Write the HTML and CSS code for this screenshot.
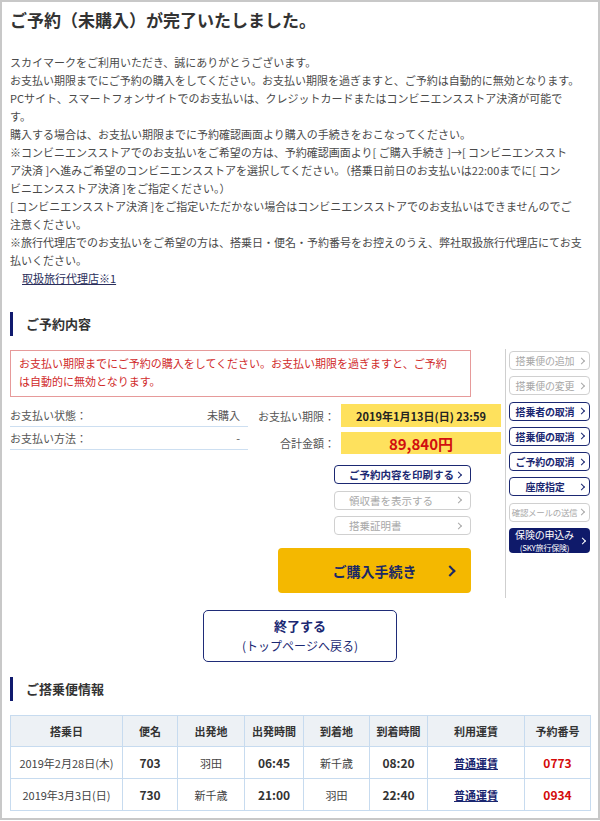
FILE: index.html
```html
<!DOCTYPE html>
<html lang="ja">
<head>
<meta charset="utf-8">
<title>ご予約完了</title>
<link rel="stylesheet" href="styles.css">
</head>
<body>
<div class="page">
  <h1 class="title">ご予約（未購入）が完了いたしました。</h1>
  <p class="notice">スカイマークをご利用いただき、誠にありがとうございます。<br>お支払い期限までにご予約の購入をしてください。お支払い期限を過ぎますと、ご予約は自動的に無効となります。<br>PCサイト、スマートフォンサイトでのお支払いは、クレジットカードまたはコンビニエンスストア決済が可能で<br>す。<br>購入する場合は、お支払い期限までに予約確認画面より購入の手続きをおこなってください。<br>※コンビニエンスストアでのお支払いをご希望の方は、予約確認画面より[ ご購入手続き ]→[ コンビニエンススト<br>ア決済 ]へ進みご希望のコンビニエンスストアを選択してください。（搭乗日前日のお支払いは22:00までに[ コン<br>ビニエンスストア決済 ]をご指定ください。）<br>[ コンビニエンスストア決済 ]をご指定いただかない場合はコンビニエンスストアでのお支払いはできませんのでご<br>注意ください。<br>※旅行代理店でのお支払いをご希望の方は、搭乗日・便名・予約番号をお控えのうえ、弊社取扱旅行代理店にてお支<br>払いください。</p>
  <p class="agent"><a href="#">取扱旅行代理店※1</a></p>

  <h2 class="sec">ご予約内容</h2>
  <div class="reserve">
    <div class="main">
      <div class="alert">お支払い期限までにご予約の購入をしてください。お支払い期限を過ぎますと、ご予約<br>は自動的に無効となります。</div>
      <div class="info">
        <div class="status">
          <div class="row"><span class="k">お支払い状態：</span><span class="v">未購入</span></div>
          <div class="row"><span class="k">お支払い方法：</span><span class="v">-</span></div>
        </div>
        <div class="pay">
          <span class="label">お支払い期限：</span><span class="hl date">2019年1月13日(日) 23:59</span>
          <span class="label">合計金額：</span><span class="hl price">89,840円</span>
        </div>
      </div>
      <div class="actions">
        <a href="#" class="btn wide navy">ご予約内容を印刷する</a>
        <a href="#" class="btn wide off">領収書を表示する</a>
        <a href="#" class="btn wide off">搭乗証明書</a>
        <a href="#" class="buy">ご購入手続き</a>
      </div>
    </div>
    <div class="side">
      <a href="#" class="btn sbtn off">搭乗便の追加</a>
      <a href="#" class="btn sbtn off">搭乗便の変更</a>
      <a href="#" class="btn sbtn navy">搭乗者の取消</a>
      <a href="#" class="btn sbtn navy">搭乗便の取消</a>
      <a href="#" class="btn sbtn navy">ご予約の取消</a>
      <a href="#" class="btn sbtn navy">座席指定</a>
      <a href="#" class="btn sbtn off small">確認メールの送信</a>
      <a href="#" class="btn sbtn fill"><span class="l1">保険の申込み</span><span class="l2">(SKY旅行保険)</span></a>
    </div>
  </div>

  <div class="finish">
    <a href="#" class="end"><span class="e1">終了する</span><span class="e2">(トップページへ戻る)</span></a>
  </div>

  <h2 class="sec sec2">ご搭乗便情報</h2>
  <table class="flights">
    <colgroup>
      <col style="width:112px"><col style="width:55px"><col style="width:67px"><col style="width:59px">
      <col style="width:66px"><col style="width:58px"><col style="width:97px"><col style="width:66px">
    </colgroup>
    <thead>
      <tr><th>搭乗日</th><th>便名</th><th>出発地</th><th>出発時間</th><th>到着地</th><th>到着時間</th><th>利用運賃</th><th>予約番号</th></tr>
    </thead>
    <tbody>
      <tr><td>2019年2月28日(木)</td><td class="num">703</td><td>羽田</td><td class="num">06:45</td><td>新千歳</td><td class="num">08:20</td><td><a href="#" class="fare">普通運賃</a></td><td class="rsv">0773</td></tr>
      <tr><td>2019年3月3日(日)</td><td class="num">730</td><td>新千歳</td><td class="num">21:00</td><td>羽田</td><td class="num">22:40</td><td><a href="#" class="fare">普通運賃</a></td><td class="rsv">0934</td></tr>
    </tbody>
  </table>
</div>
</body>
</html>
```

FILE: styles.css
```css
* { box-sizing: border-box; }
html, body { margin: 0; padding: 0; background: #fff; }
body {
  font-family: "Noto Sans CJK JP", "Noto Sans", sans-serif;
  color: #444;
  font-size: 11px;
}
a { text-decoration: none; }

.page {
  width: 600px;
  height: 820px;
  border: 2px solid #c8c8c8;
  padding: 7px 8px 0 8px;
  overflow: hidden;
}

.title {
  margin: 0;
  font-size: 17px;
  line-height: 22px;
  font-weight: bold;
  color: #333;
}

.notice {
  margin: 22px 0 0;
  font-size: 11px;
  line-height: 18px;
  color: #4a4a4a;
  white-space: nowrap;
}

.agent {
  margin: 0;
  padding-left: 12px;
  line-height: 18px;
}
.agent a {
  color: #2b2f5c;
  text-decoration: underline;
}

.sec {
  margin: 25px 0 0;
  height: 24px;
  line-height: 24px;
  border-left: 3px solid #101a6e;
  padding-left: 13px;
  font-size: 13px;
  font-weight: bold;
  color: #333;
}

.reserve {
  display: flex;
  margin-top: 13px;
}
.main {
  flex: 1;
  padding: 1px 0 5px;
  display: flex;
  flex-direction: column;
}
.alert {
  margin-right: 34px;
  border: 1px solid #e69a9a;
  padding: 3px 8px 6px;
  line-height: 18px;
  color: #d02a2a;
}

.info {
  display: flex;
  margin-top: 7px;
  margin-right: 4px;
}
.status {
  width: 238px;
}
.row {
  display: flex;
  justify-content: space-between;
  height: 23px;
  line-height: 22px;
  border-bottom: 1px solid #cddff1;
  padding-right: 8px;
  color: #555;
}
.pay {
  flex: 1;
  display: grid;
  grid-template-columns: auto 160px;
  grid-template-rows: 23px 22px;
  column-gap: 6px;
  row-gap: 5px;
  justify-content: end;
  align-items: center;
}
.label {
  text-align: right;
  color: #555;
}
.hl {
  height: 100%;
  background: #fee15d;
  display: flex;
  align-items: center;
  justify-content: center;
  font-weight: bold;
}
.date { color: #222; font-size: 11px; }
.price { color: #d10f0f; font-size: 15px; }

.actions {
  display: flex;
  flex-direction: column;
  align-items: flex-end;
  gap: 6.5px;
  margin-top: 11px;
  margin-right: 34px;
}

.btn {
  position: relative;
  display: block;
  height: 19px;
  line-height: 17px;
  border: 1px solid #ccc;
  border-radius: 4px;
  background: #fff;
  font-size: 10.5px;
  white-space: nowrap;
}
.btn::after {
  content: "";
  position: absolute;
  right: 7px;
  top: 50%;
  width: 4px;
  height: 4px;
  border-top: 1.2px solid currentColor;
  border-right: 1.2px solid currentColor;
  transform: translateY(-50%) rotate(45deg);
}
.btn.off { color: #a8a8a8; border-color: #d0d0d0; }
.btn.navy { color: #1b2872; border-color: #1b2872; font-weight: bold; }

.wide {
  width: 137px;
  padding-left: 14px;
}
.wide::after { right: 9px; }

.buy {
  position: relative;
  margin-top: 6.5px;
  width: 193px;
  height: 45px;
  background: #f4b800;
  border-radius: 4px;
  display: flex;
  align-items: center;
  justify-content: center;
  color: #1a2866;
  font-size: 14px;
  font-weight: bold;
}
.buy::after {
  content: "";
  position: absolute;
  right: 17px;
  top: 50%;
  width: 6px;
  height: 6px;
  border-top: 2px solid #1a2866;
  border-right: 2px solid #1a2866;
  transform: translateY(-50%) rotate(45deg);
}

.side {
  width: 85px;
  border-left: 1px solid #cfcfcf;
  padding: 2px 0 0 3px;
  display: flex;
  flex-direction: column;
  gap: 6.3px;
}
.sbtn {
  width: 81px;
  text-align: center;
  padding-right: 9px;
  font-size: 10px;
  letter-spacing: -0.2px;
}
.sbtn::after { right: 5px; }
.sbtn.small { font-size: 8.5px; padding-right: 10px; letter-spacing: -0.3px; }
.sbtn.fill {
  height: 25px;
  border: 0;
  background: #0f1a6a;
  color: #fff;
  display: flex;
  flex-direction: column;
  align-items: center;
  justify-content: center;
  padding-right: 10px;
}
.l1 { font-size: 10px; line-height: 14px; }
.l2 { font-size: 8px; line-height: 11px; }

.finish {
  margin-top: 12px;
  display: flex;
  justify-content: center;
}
.end {
  width: 194px;
  height: 52px;
  border: 1px solid #1f2c78;
  border-radius: 5px;
  display: flex;
  flex-direction: column;
  align-items: center;
  padding-top: 5px;
  color: #1b2872;
}
.e1 { font-size: 13px; font-weight: bold; line-height: 20px; }
.e2 { font-size: 12px; line-height: 19px; }

.sec2 { margin-top: 15px; }

.flights {
  margin-top: 14px;
  width: 580px;
  table-layout: fixed;
  border-collapse: collapse;
}
.flights th,
.flights td {
  border: 1px solid #c7dbef;
  text-align: center;
  padding: 0;
  font-size: 11px;
}
.flights th {
  height: 31px;
  background: #edf1f5;
  color: #333;
  font-weight: bold;
}
.flights td {
  height: 32px;
  color: #444;
}
.flights td.num { font-weight: bold; font-size: 12px; color: #333; }
.flights td.rsv { font-weight: bold; font-size: 12px; color: #d40a0a; }
.fare {
  color: #1a2670;
  font-weight: bold;
  text-decoration: underline;
}
```
